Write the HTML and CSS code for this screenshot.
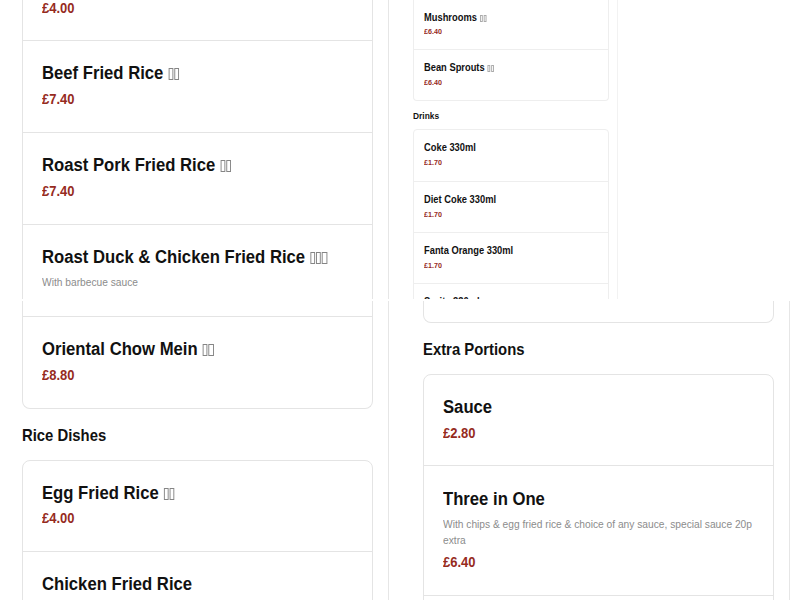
FILE: index.html
```html
<!DOCTYPE html>
<html lang="en">
<head>
<meta charset="utf-8">
<title>Menu</title>
<link rel="stylesheet" href="styles.css">
</head>
<body>
<main class="board">
  <section class="pane pane-rice">
    <div class="column">
      <div class="card card-open card-cut">
        <article class="item item-first"><p class="price">£4.00</p></article>
        <article class="item"><h3><span>Beef Fried Rice</span><i></i><i></i></h3><p class="price">£7.40</p></article>
        <article class="item"><h3><span>Roast Pork Fried Rice</span><i></i><i></i></h3><p class="price">£7.40</p></article>
        <article class="item"><h3><span>Roast Duck &amp; Chicken Fried Rice</span><i></i><i></i><i></i></h3><p class="note">With barbecue sauce</p></article>
      </div>
    </div>
  </section>

  <section class="pane pane-drinks">
    <div class="column">
      <div class="card card-open">
        <article class="item item-first"><h3><span>Mushrooms</span><i></i><i></i></h3><p class="price">£6.40</p></article>
        <article class="item"><h3><span>Bean Sprouts</span><i></i><i></i></h3><p class="price">£6.40</p></article>
      </div>
      <h2><span>Drinks</span></h2>
      <div class="card">
        <article class="item"><h3><span>Coke 330ml</span></h3><p class="price">£1.70</p></article>
        <article class="item"><h3><span>Diet Coke 330ml</span></h3><p class="price">£1.70</p></article>
        <article class="item"><h3><span>Fanta Orange 330ml</span></h3><p class="price">£1.70</p></article>
        <article class="item"><h3><span>Sprite 330ml</span></h3></article>
      </div>
    </div>
  </section>

  <section class="pane pane-noodles">
    <div class="column">
      <div class="card card-open">
        <article class="item item-first"></article>
        <article class="item"><h3><span>Oriental Chow Mein</span><i></i><i></i></h3><p class="price">£8.80</p></article>
      </div>
      <h2><span>Rice Dishes</span></h2>
      <div class="card">
        <article class="item item-short"><h3><span>Egg Fried Rice</span><i></i><i></i></h3><p class="price">£4.00</p></article>
        <article class="item"><h3><span>Chicken Fried Rice</span></h3></article>
      </div>
    </div>
  </section>

  <section class="pane pane-extras">
    <div class="column">
      <div class="card card-open">
        <article class="item item-first"></article>
      </div>
      <h2><span>Extra Portions</span></h2>
      <div class="card">
        <article class="item item-short"><h3><span>Sauce</span></h3><p class="price">£2.80</p></article>
        <article class="item item-tall"><h3><span>Three in One</span></h3><p class="note">With chips &amp; egg fried rice &amp; choice of any sauce, special sauce 20p extra</p><p class="price">£6.40</p></article>
        <article class="item"></article>
      </div>
    </div>
  </section>
</main>
</body>
</html>
```
FILE: styles.css
```css
* { box-sizing: border-box; }

body {
  margin: 0;
  width: 800px;
  height: 600px;
  overflow: hidden;
  background: #fff;
  color: #111;
  font-family: "Liberation Sans", Arial, sans-serif;
}

h2, h3, p { margin: 0; }

/* Slightly condensed type throughout */
h2, h3, .price, .note {
  transform: scaleX(0.945);
  transform-origin: 0 0;
}

.board {
  display: grid;
  grid-template-columns: 400px 400px;
  grid-template-rows: 299px 299px;
  row-gap: 2px;
  height: 600px;
}

.pane { overflow: hidden; }

.column {
  width: 389px;
  height: 299px;
  padding: 0 15px 0 22px;
  border-right: 1px solid #e6e6e6;
}

.card {
  border: 1px solid #e4e4e4;
  border-radius: 8px;
}

.card-open {
  border-top: 0;
  border-top-left-radius: 0;
  border-top-right-radius: 0;
}

.card-cut { height: 320px; }

.item {
  height: 92px;
  padding: 21px 18px 0 18.7px;
}

.item + .item { border-top: 1px solid #e4e4e4; }

.item-short { height: 90px; }

h3 {
  display: flex;
  align-items: center;
  height: 22px;
  font-size: 17.65px;
  line-height: 22px;
  white-space: nowrap;
}

h3 i {
  flex: none;
  width: 5.3px;
  height: 12px;
  margin: 1px 1.05px 0 0;
  border: 1px solid #858585;
}

h3 span + i { margin-left: 5.3px; }

.price {
  margin-top: 8px;
  color: #962b1e;
  font-size: 13.76px;
  font-weight: bold;
  line-height: 16px;
}

.note {
  width: 105.8%;
  margin-top: 6px;
  color: #8c8c8c;
  font-size: 10.82px;
  line-height: 16px;
}

.note + .price { margin-top: 7px; }

h2 {
  height: 51px;
  padding-top: 18px;
  font-size: 15.72px;
  line-height: 18px;
}

.pane-rice .item-first { height: 40px; padding-top: 1px; }
.pane-rice .item-first .price { margin-top: 0; }

.pane-noodles .item-first { height: 15px; padding-top: 0; }
.pane-noodles .price { margin-top: 7px; }
.pane-noodles .card-open .price { margin-top: 8px; }

.pane-extras .column { width: 390px; padding: 0 15px 0 23px; }
.pane-extras .item { height: 91px; }
.pane-extras .item.item-first { height: 21px; padding-top: 0; }
.pane-extras .item.item-short { height: 90px; padding-top: 20px; }
.pane-extras .item.item-tall { height: 130px; }
.pane-extras h3 { height: 23px; line-height: 24px; }

.pane-drinks .column {
  width: 218px;
  padding: 0 8px 0 13.4px;
  border-color: #f2f2f2;
}
.pane-drinks .card { border-color: #eee; border-radius: 4px; }
.pane-drinks .card-open { border-radius: 0 0 4px 4px; }
.pane-drinks .item { height: 51px; padding: 12px 10px 0; }
.pane-drinks .item + .item { border-color: #eee; }
.pane-drinks .item-first { height: 49px; padding-top: 12px; }
.pane-drinks h3 { height: 12px; font-size: 10px; line-height: 12px; transform: scaleX(0.933); }
.pane-drinks h3 i { width: 3.2px; height: 7px; margin: 0 0.8px 0 0; border-color: #aaa; }
.pane-drinks h3 span + i { margin-left: 3px; }
.pane-drinks .price { margin-top: 4px; font-size: 7.57px; line-height: 10px; }
.pane-drinks .item-first .price { margin-top: 3px; }
.pane-drinks h2 { height: 28px; padding-top: 10px; font-size: 8.9px; line-height: 11px; }
```
